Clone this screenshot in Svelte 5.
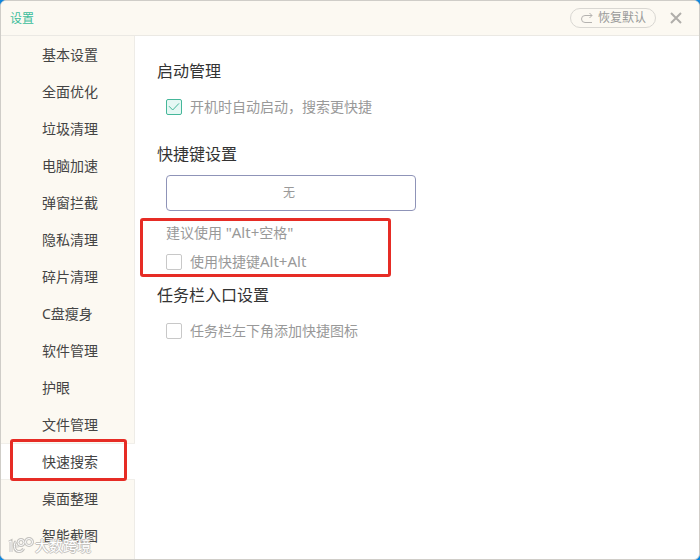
<script>
  const sections = [
    '基本设置', '全面优化', '垃圾清理', '电脑加速', '弹窗拦截', '隐私清理', '碎片清理',
    'C盘瘦身', '软件管理', '护眼', '文件管理', '快速搜索', '桌面整理', '智能截图'
  ];
  let current = $state('快速搜索');
  let autoStart = $state(true);
  let doubleAlt = $state(false);
  let taskbarIcon = $state(false);
  let hotkey = $state('无');

  function restore() {
    autoStart = true;
    doubleAlt = false;
    taskbarIcon = false;
    hotkey = '无';
  }
</script>

{#snippet logo()}
  <path d="M2 5l2-1v11M9 4.500C6.500 6.500 6.500 14.500 12 14.500c3 0 4-1.500 4.500-3M10 8.500v2" />
  <circle cx="14" cy="5.500" r="3" />
  <circle cx="22" cy="5" r="3.500" />
{/snippet}

<div class="desktop">
  <div class="window">
    <header>
      <h1>设置</h1>
      <button class="restore" type="button" onclick={restore}>
        <svg width="14" height="12" viewBox="0 0 14 12" aria-hidden="true">
          <path d="M12 3.500H5a3.500 3.500 0 0 0 0 7h7M9.500 1L12 3.500 9.500 6" />
        </svg>
        恢复默认
      </button>
      <button class="close" type="button" aria-label="关闭">
        <svg width="12" height="12" viewBox="0 0 12 12" aria-hidden="true">
          <path d="M1 1l10 10M11 1L1 11" />
        </svg>
      </button>
    </header>

    <div class="body">
      <nav>
        {#each sections as name}
          <button
            type="button"
            class="item"
            class:active={name === current}
            aria-current={name === current ? 'page' : undefined}
            onclick={() => (current = name)}
          >
            {name}
            {#if name === '快速搜索'}<span class="mark"></span>{/if}
          </button>
        {/each}
      </nav>

      <main>
        <section>
          <h2>启动管理</h2>
          <label class="option">
            <input type="checkbox" bind:checked={autoStart} />
            <span class="box">
              <svg width="12" height="10" viewBox="0 0 12 10" aria-hidden="true"><path d="M1 4.2l3.7 3.8L11 1.4" /></svg>
            </span>
            开机时自动启动，搜索更快捷
          </label>
        </section>

        <section>
          <h2>快捷键设置</h2>
          <input class="hotkey" type="text" aria-label="快捷键" readonly value={hotkey} />
          <div class="hints">
            <p>建议使用 <span class="keys">"Alt+</span>空格<span class="keys">"</span></p>
            <label class="option">
              <input type="checkbox" bind:checked={doubleAlt} />
              <span class="box">
                <svg width="12" height="10" viewBox="0 0 12 10" aria-hidden="true"><path d="M1 4.2l3.7 3.8L11 1.4" /></svg>
              </span>
              <span>使用快捷键<span class="keys">Alt+Alt</span></span>
            </label>
            <span class="mark"></span>
          </div>
        </section>

        <section>
          <h2>任务栏入口设置</h2>
          <label class="option">
            <input type="checkbox" bind:checked={taskbarIcon} />
            <span class="box">
              <svg width="12" height="10" viewBox="0 0 12 10" aria-hidden="true"><path d="M1 4.2l3.7 3.8L11 1.4" /></svg>
            </span>
            任务栏左下角添加快捷图标
          </label>
        </section>
      </main>
    </div>

    <div class="watermark">
      <svg width="28" height="18" viewBox="0 0 28 18" aria-hidden="true">
        <g class="outer">{@render logo()}</g>
        <g class="inner">{@render logo()}</g>
      </svg>
      <span>大数跨境</span>
    </div>
  </div>
</div>

<style>
  :global(body) {
    margin: 0;
  }

  .desktop {
    height: 100vh;
    background: #1186dc;
    font-family: "Noto Sans", "Noto Sans CJK SC", sans-serif;
    font-size: 14px;
    color: #444;
  }

  .window {
    position: relative;
    display: flex;
    flex-direction: column;
    box-sizing: border-box;
    height: 100%;
    overflow: hidden;
    border: 1px solid #cfcdc8;
    border-radius: 6px;
    background: #fff;
  }

  button {
    padding: 0;
    border: 0;
    background: none;
    font: inherit;
    color: inherit;
    cursor: pointer;
  }

  svg {
    fill: none;
    stroke: currentColor;
  }

  header {
    display: flex;
    flex: none;
    align-items: center;
    box-sizing: border-box;
    height: 35px;
    padding: 0 17px 0 9px;
    border-bottom: 1px solid #ebe9e4;
    background: #fcf9f2;
  }

  h1 {
    flex: 1;
    margin: 0;
    font-size: 12px;
    font-weight: 400;
    color: #3dbd9b;
  }

  .restore {
    display: flex;
    align-items: center;
    justify-content: center;
    gap: 4px;
    box-sizing: border-box;
    width: 86px;
    height: 20px;
    border: 1px solid #d9d7d2;
    border-radius: 10px;
    font-size: 12px;
    line-height: 18px;
    color: #999;
  }

  .restore svg {
    stroke: #b5b3b0;
  }

  .close {
    display: flex;
    margin-left: 14px;
    color: #b0aeaa;
  }

  .close svg {
    stroke-width: 2;
  }

  .body {
    display: flex;
    flex: 1;
    min-height: 0;
  }

  nav {
    flex: none;
    box-sizing: border-box;
    width: 134px;
    border-right: 1px solid #eeece7;
    background: #fcf9f2;
  }

  .item {
    position: relative;
    display: block;
    box-sizing: border-box;
    width: 133px;
    height: 37px;
    padding-left: 41px;
    line-height: 37px;
    text-align: left;
  }

  .item.active {
    width: 134px;
    background: #fff;
    box-shadow: inset 0 1px #f1efea, inset 0 -1px #f1efea;
  }

  .mark {
    position: absolute;
    border: 3px solid #e62c25;
    border-radius: 3px;
    pointer-events: none;
  }

  .item .mark {
    inset: -4px 8px -1px 9px;
  }

  main {
    flex: 1;
    padding: 23px 22px;
  }

  section {
    margin-bottom: 24px;
  }

  section:nth-child(2) {
    margin-bottom: 10px;
  }

  h2 {
    margin: 0 0 13px;
    font-size: 16px;
    font-weight: 400;
    line-height: 24px;
    color: #333;
  }

  .option {
    position: relative;
    display: flex;
    align-items: center;
    gap: 8px;
    width: max-content;
    height: 22px;
    margin-left: 9px;
    line-height: 22px;
    color: #999;
  }

  .option input {
    position: absolute;
    width: 16px;
    height: 16px;
    margin: 0;
    opacity: 0;
  }

  .box {
    display: flex;
    align-items: center;
    justify-content: center;
    box-sizing: border-box;
    width: 16px;
    height: 16px;
    border: 1px solid #c8c8c8;
    border-radius: 2px;
  }

  .box svg {
    visibility: hidden;
  }

  input:checked + .box {
    border-color: #45b79a;
    background: #e6f8f4;
    color: #45b79a;
  }

  input:checked + .box svg {
    visibility: visible;
  }

  .keys {
    font-size: 15px;
    line-height: 20px;
  }

  .hotkey {
    display: block;
    box-sizing: border-box;
    width: 250px;
    height: 36px;
    margin: -4px 0 0 9px;
    padding: 0 4px 2px 0;
    border: 1px solid #8f94b8;
    border-radius: 4px;
    background: #fff;
    font: inherit;
    font-size: 12px;
    text-align: center;
    color: #999;
    outline: none;
  }

  .hints {
    position: relative;
    width: 250px;
    margin-top: 11px;
  }

  .hints p {
    height: 22px;
    margin: 0 0 7px 9px;
    line-height: 22px;
    color: #999;
  }

  .hints .mark {
    inset: -4px 16px -4px -17px;
  }

  .watermark {
    position: absolute;
    left: 6px;
    bottom: 4px;
    display: flex;
    align-items: center;
    font-size: 14px;
    line-height: 18px;
    color: #fff;
    text-shadow: 1px 0 #c4c2be, -1px 0 #c4c2be, 0 1px #c4c2be, 0 -1px #c4c2be;
    pointer-events: none;
  }

  .watermark .outer {
    stroke: #c4c2be;
    stroke-width: 3;
  }

  .watermark .inner {
    stroke: #fff;
    stroke-width: 1;
  }
</style>
